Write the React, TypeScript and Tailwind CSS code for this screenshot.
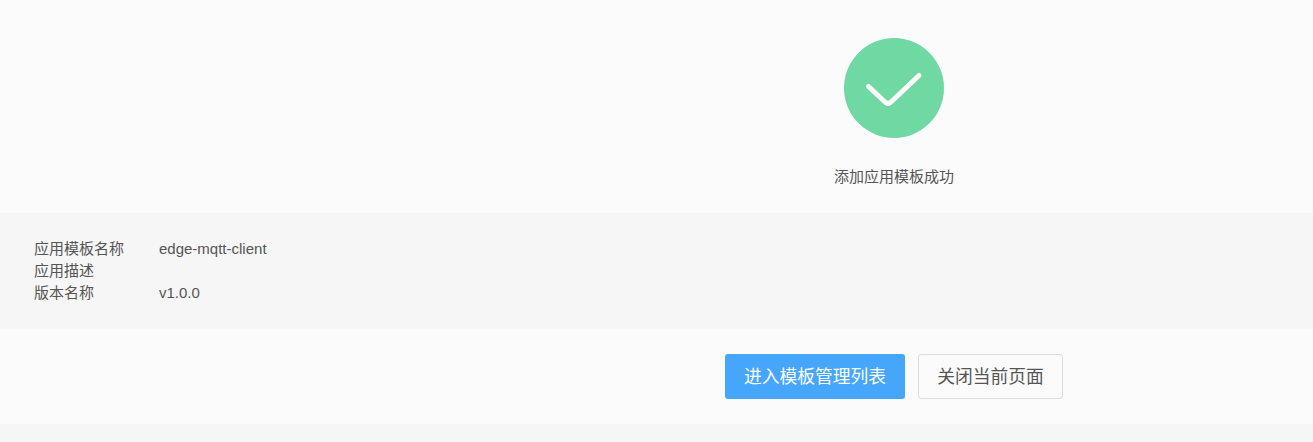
export default function App() {
  const rows = [
    { label: '应用模板名称', value: 'edge-mqtt-client' },
    { label: '应用描述', value: '' },
    { label: '版本名称', value: 'v1.0.0' },
  ]

  return (
    <div className="min-h-[442px] bg-[#f6f6f6] font-['Liberation_Sans','Noto_Sans_CJK_SC',sans-serif] text-[15px] text-[#555555]">
      <div className="h-[213px] bg-[#fbfbfb] pt-[38px] pl-[475px]">
        <div className="flex flex-col items-center">
          <div className="flex h-[100px] w-[100px] items-center justify-center rounded-full bg-[#70d8a3]">
            <svg width="100" height="100" viewBox="0 0 100 100" fill="none">
              <path
                d="M24.5 48.5 L41 64 Q44 66.8 47 64 L75 37.5"
                stroke="#fbfbfb"
                strokeWidth="5"
                strokeLinecap="round"
                strokeLinejoin="round"
              />
            </svg>
          </div>
          <p className="mt-[28px] leading-[22px]">添加应用模板成功</p>
        </div>
      </div>

      <div className="h-[116px] bg-[#f6f6f6] px-[34px] py-[25px]">
        {rows.map((row) => (
          <div key={row.label} className="flex h-[22px] leading-[22px]">
            <span className="w-[125px]">{row.label}</span>
            <span>{row.value}</span>
          </div>
        ))}
      </div>

      <div className="flex h-[95px] justify-center gap-[13px] bg-[#fbfbfb] pt-[25px] pl-[475px]">
        <button className="h-[45px] w-[180px] rounded-[3px] bg-[#46a6fb] pt-[2px] text-[17.75px] text-[#ffffff]">
          进入模板管理列表
        </button>
        <button className="h-[45px] w-[145px] rounded-[3px] border border-[#dcdcdc] bg-[#fbfbfb] pt-[2px] text-[17.75px] text-[#555555]">
          关闭当前页面
        </button>
      </div>
    </div>
  )
}
